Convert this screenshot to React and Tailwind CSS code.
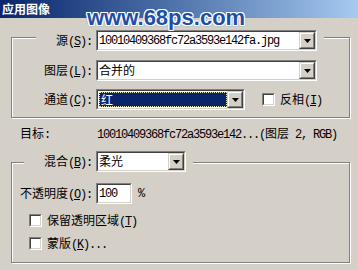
import React from "react";

function L({ children }) {
  return <span className="font-['Liberation_Mono'] tracking-[-1.2px]">{children}</span>;
}

function Mn({ cn, m, tail = ":" }) {
  return (
    <>
      {cn}
      <L>
        (<span className="underline underline-offset-[1px]">{m}</span>){tail}
      </L>
    </>
  );
}

function Sunken({ className = "", children, innerClass = "" }) {
  return (
    <div className={`border border-t-[#808080] border-l-[#808080] border-r-white border-b-white ${className}`}>
      <div className={`h-full w-full border border-t-[#404040] border-l-[#404040] border-r-[#d4d0c8] border-b-[#d4d0c8] bg-white ${innerClass}`}>
        {children}
      </div>
    </div>
  );
}

function DropBtn() {
  return (
    <div className="h-[17px] w-[16px] shrink-0 border border-t-[#d4d0c8] border-l-[#d4d0c8] border-r-[#404040] border-b-[#404040]">
      <div className="flex h-full w-full items-center justify-center border border-t-white border-l-white border-r-[#808080] border-b-[#808080] bg-[#d4d0c8]">
        <svg width="7" height="4" viewBox="0 0 7 4" className="mt-[1px]">
          <polygon points="0,0 7,0 3.5,4" fill="#000" />
        </svg>
      </div>
    </div>
  );
}

function Combo({ className, children, selected }) {
  return (
    <Sunken className={`h-[21px] shrink-0 ${className}`} innerClass="flex items-stretch">
      <div className="flex min-w-0 flex-1 items-center overflow-hidden pl-[1px]">
        {selected ? (
          <div className="flex h-[15px] flex-1 items-center border border-dotted border-[#e8e8c0] bg-[#0a246a] pl-[1px] text-white">
            {children}
          </div>
        ) : (
          <div className="whitespace-nowrap">{children}</div>
        )}
      </div>
      <DropBtn />
    </Sunken>
  );
}

function Check({ children }) {
  return (
    <div className="flex h-[13px] items-center">
      <Sunken className="h-[13px] w-[13px] shrink-0" />
      <span className="ml-[5px] whitespace-nowrap">{children}</span>
    </div>
  );
}

export default function App() {
  return (
    <div className="relative h-[270px] w-[358px] overflow-hidden bg-[#d4d0c8] font-['Liberation_Mono','Noto_Sans_CJK_SC',monospace] text-[12px] leading-none text-black">
      {/* title bar */}
      <div className="flex h-[18px] items-center bg-gradient-to-r from-[#0a246a] to-[#a6caf0] pl-[2px]">
        <span className="font-['Noto_Sans_CJK_SC'] text-[12px] font-bold text-white">应用图像</span>
      </div>

      {/* watermark */}
      <div className="pointer-events-none absolute left-[87px] top-[7px] font-['Liberation_Sans'] text-[22px] font-bold leading-none tracking-[0px] text-[#1f4ea6] [text-shadow:1px_0_0_#fff,-1px_0_0_#fff,0_1px_0_#fff,0_-1px_0_#fff,1px_1px_0_#fff,-1px_-1px_0_#fff,1px_-1px_0_#fff,-1px_1px_0_#fff,0_0_3px_#3a6ac0]">
        www.68ps.com
      </div>

      {/* group 1 */}
      <div className="ml-[11px] mt-[19px] w-[339px] border border-[#808080] shadow-[inset_1px_1px_0_#fff,1px_1px_0_#fff]">
        <div className="-mt-[8px] ml-[24px] flex h-[21px] w-[288px] items-center bg-[#d4d0c8]">
          <div className="w-[60px] whitespace-nowrap pr-[4px] text-right font-['Noto_Sans_CJK_SC']">
            <Mn cn="源" m="S" />
          </div>
          <Combo className="w-[221px]">
            <L>10010409368fc72a3593e142fa.jpg</L>
          </Combo>
        </div>
        <div className="ml-[24px] mt-[9px] flex h-[21px] items-center">
          <div className="w-[60px] whitespace-nowrap pr-[4px] text-right font-['Noto_Sans_CJK_SC']">
            <Mn cn="图层" m="L" />
          </div>
          <Combo className="w-[221px]">
            <span className="font-['Noto_Sans_CJK_SC']">合并的</span>
          </Combo>
        </div>
        <div className="ml-[24px] mt-[8px] mb-[7px] flex h-[21px] items-center">
          <div className="w-[60px] whitespace-nowrap pr-[4px] text-right font-['Noto_Sans_CJK_SC']">
            <Mn cn="通道" m="C" />
          </div>
          <Combo className="w-[149px]" selected>
            <span className="font-['Noto_Sans_CJK_SC']">红</span>
          </Combo>
          <div className="ml-[17px] font-['Noto_Sans_CJK_SC']">
            <Check>
              <Mn cn="反相" m="I" tail="" />
            </Check>
          </div>
        </div>
      </div>

      {/* target */}
      <div className="ml-[20px] mt-[8px] flex h-[16px] items-center">
        <div className="w-[77px] whitespace-nowrap font-['Noto_Sans_CJK_SC']">
          目标<L>:</L>
        </div>
        <div className="whitespace-nowrap">
          <L>10010409368fc72a3593e142...(</L>
          <span className="font-['Noto_Sans_CJK_SC']">图层</span>
          <L> 2, RGB)</L>
        </div>
      </div>

      {/* group 2 */}
      <div className="ml-[11px] mt-[20px] w-[339px] border border-[#808080] shadow-[inset_1px_1px_0_#fff,1px_1px_0_#fff]">
        <div className="-mt-[12px] ml-[12px] flex h-[21px] w-[169px] items-center bg-[#d4d0c8]">
          <div className="w-[72px] whitespace-nowrap pr-[4px] text-right font-['Noto_Sans_CJK_SC']">
            <Mn cn="混合" m="B" />
          </div>
          <Combo className="w-[90px]">
            <span className="font-['Noto_Sans_CJK_SC']">柔光</span>
          </Combo>
        </div>
        <div className="ml-[4px] mt-[11px] flex h-[21px] items-center">
          <div className="w-[80px] whitespace-nowrap pr-[4px] text-right font-['Noto_Sans_CJK_SC']">
            <Mn cn="不透明度" m="O" />
          </div>
          <Sunken className="h-[21px] w-[36px]" innerClass="flex items-center pl-[1px]">
            <L>100</L>
          </Sunken>
          <span className="ml-[6px]">
            <L>%</L>
          </span>
        </div>
        <div className="ml-[17px] mt-[10px] font-['Noto_Sans_CJK_SC']">
          <Check>
            保留透明区域<Mn cn="" m="T" tail="" />
          </Check>
        </div>
        <div className="mb-[12px] ml-[17px] mt-[10px] font-['Noto_Sans_CJK_SC']">
          <Check>
            蒙版<Mn cn="" m="K" tail="..." />
          </Check>
        </div>
      </div>
    </div>
  );
}
